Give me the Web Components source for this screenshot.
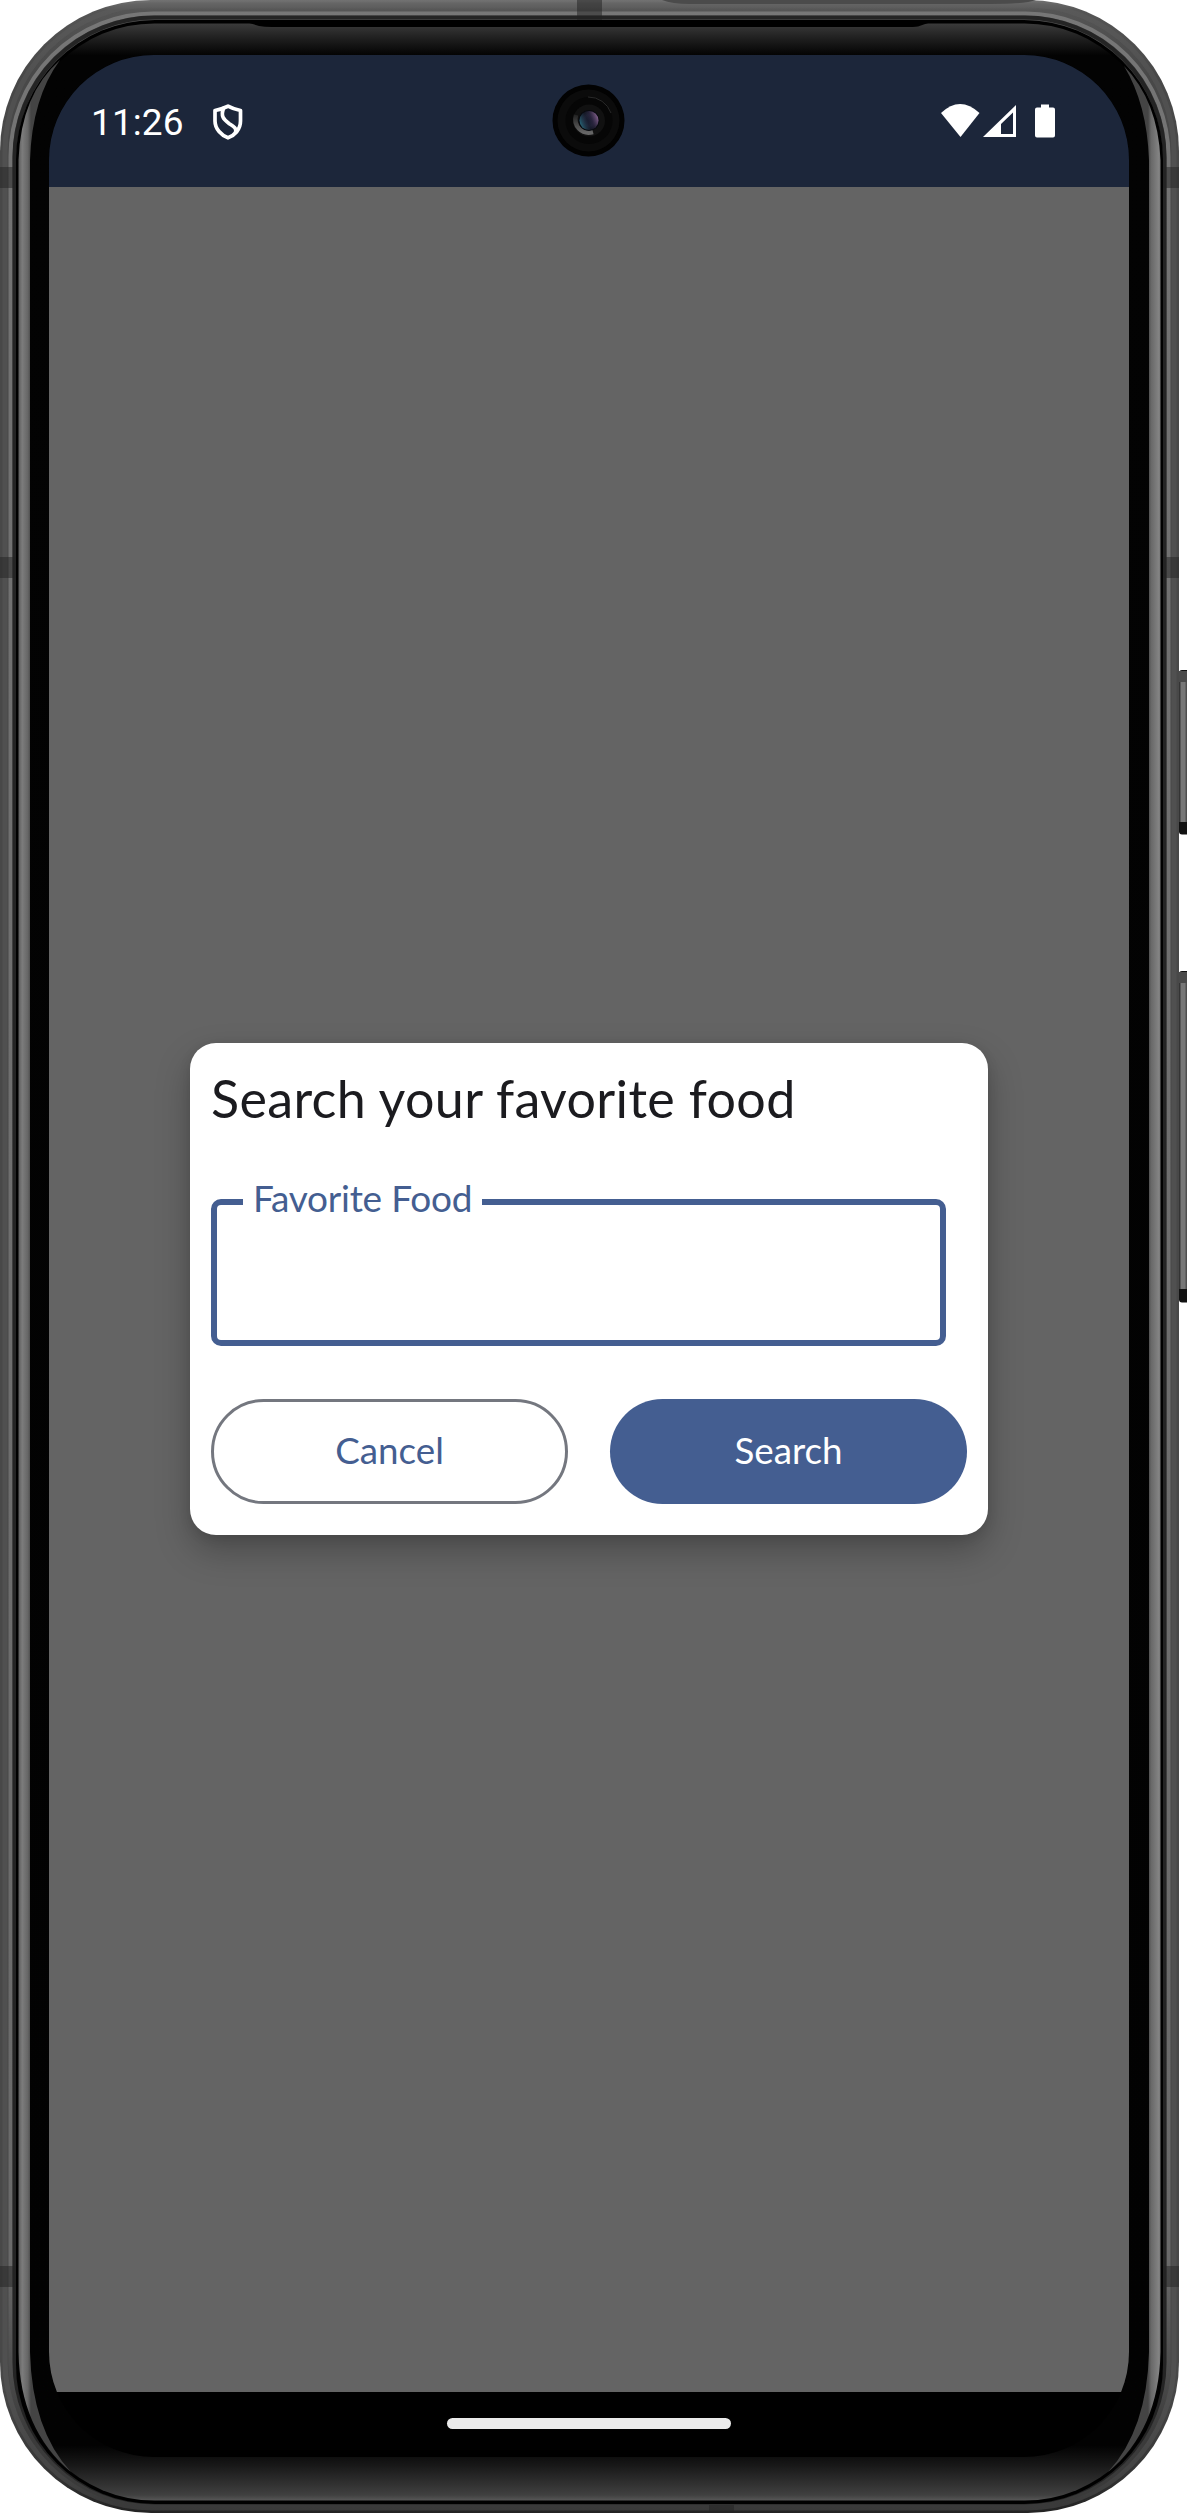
<!DOCTYPE html>
<html lang="en"><head><meta charset="utf-8"><title>Favorite food</title>
<style>html,body{margin:0;background:#fff}body{width:1187px;height:2513px;overflow:hidden;font-family:Lato,sans-serif}</style></head>
<body>
<phone-frame>
  <status-bar slot="status" time="11:26"></status-bar>
  <search-dialog heading="Search your favorite food">
    <outlined-field label="Favorite Food"></outlined-field>
    <pill-button slot="actions" variant="outlined">Cancel</pill-button>
    <pill-button slot="actions" variant="filled">Search</pill-button>
  </search-dialog>
</phone-frame>
<script>
const define=(name,html)=>customElements.define(name,class extends HTMLElement{
  constructor(){super();this.attachShadow({mode:'open'}).innerHTML=html;}
  connectedCallback(){this.shadowRoot.querySelectorAll('[data-attr]').forEach(n=>n.textContent=this.getAttribute(n.dataset.attr)||'');}
});

define('phone-shell',`<style>:host{display:block;width:1187px;height:2513px}svg{display:block}</style>
<svg width="1187" height="2513" viewBox="0 0 1187 2513">
<defs>
<linearGradient id="body" x2="0" y2="1"><stop offset="0" stop-color="#727272"/><stop offset=".004" stop-color="#555"/><stop offset=".03" stop-color="#484848"/><stop offset=".95" stop-color="#484848"/><stop offset=".985" stop-color="#343434"/><stop offset="1" stop-color="#222"/></linearGradient>
<linearGradient id="rim" gradientUnits="userSpaceOnUse" x1="0" x2="0" y1="10" y2="2508"><stop offset="0" stop-color="#777"/><stop offset=".06" stop-color="#737373"/><stop offset=".9" stop-color="#6a6a6a"/><stop offset=".97" stop-color="#3b3b3b"/><stop offset="1" stop-color="#3a3a3a"/></linearGradient>
<linearGradient id="glass" gradientUnits="userSpaceOnUse" x1="0" x2="0" y1="23" y2="2500"><stop offset="0" stop-color="#3b3b3b"/><stop offset=".006" stop-color="#202020"/><stop offset=".013" stop-color="#030303"/><stop offset=".978" stop-color="#020202"/><stop offset=".986" stop-color="#181818"/><stop offset=".998" stop-color="#404040"/><stop offset="1" stop-color="#555"/></linearGradient>
<linearGradient id="edge" gradientUnits="userSpaceOnUse" x1="18.500" x2="31" y1="0" y2="0"><stop offset="0" stop-color="#5c5c5c"/><stop offset=".3" stop-color="#7c7c7c"/><stop offset=".75" stop-color="#666"/><stop offset="1" stop-color="#444"/></linearGradient>
<linearGradient id="edge2" gradientUnits="userSpaceOnUse" x1="1148" x2="1160.500" y1="0" y2="0"><stop offset="0" stop-color="#444"/><stop offset=".25" stop-color="#686868"/><stop offset=".85" stop-color="#838383"/><stop offset="1" stop-color="#777"/></linearGradient>
<linearGradient id="key"><stop offset="0" stop-color="#222"/><stop offset=".3" stop-color="#777"/><stop offset=".7" stop-color="#777"/><stop offset="1" stop-color="#444"/></linearGradient>
</defs>
<g><rect x="1179" y="670" width="12" height="164.500" rx="3" fill="#111"/><rect x="1179" y="671" width="8" height="11" fill="#4a4a4a"/><rect x="1179" y="682" width="8" height="140" fill="url(#key)"/>
<rect x="1179" y="971" width="12" height="331.500" rx="3" fill="#111"/><rect x="1179" y="972" width="8" height="11" fill="#4a4a4a"/><rect x="1179" y="983" width="8" height="306" fill="url(#key)"/></g>
<rect x="0" y="0" width="1179" height="2513" rx="151" fill="url(#body)"/>
<rect x="5" y="5" width="1169" height="2503" rx="147" fill="none" stroke="#606060" stroke-opacity=".35" stroke-width="5"/>
<rect x="10.500" y="13.500" width="1158" height="2492" rx="143" fill="none" stroke="url(#rim)" stroke-width="4"/>
<rect x="14.500" y="17.500" width="1150" height="2485" rx="140" fill="none" stroke="#242424" stroke-width="4"/>
<path d="M662 0H1036Q1026 4 990 4H690Q672 4 662 0Z" fill="#4b4b4b"/>
<g fill="#222" fill-opacity=".5"><rect x="577" y="0" width="25" height="20"/><rect x="0" y="167" width="16" height="21"/><rect x="1163" y="167" width="16" height="21"/><rect x="0" y="557" width="16" height="21"/><rect x="1163" y="557" width="16" height="21"/><rect x="0" y="2266" width="16" height="21"/><rect x="1163" y="2266" width="16" height="21"/><rect x="709" y="2505" width="25" height="8"/></g>
<rect x="16" y="20" width="1147" height="2484" rx="139" fill="#000"/>
<rect x="18.500" y="23.500" width="1142" height="2477" rx="136" fill="url(#glass)"/>
<path d="M246 22H931L918 26.500Q914 27 905 27H272Q264 27 259 26Z" fill="#000"/>
<path d="M18.500 160Q21 94 60 60Q32 98 30 160V2352Q32 2430 71 2472Q20 2430 18.500 2352Z" fill="url(#edge)"/>
<path d="M1160.500 160Q1158 101 1124 66Q1147 104 1149 160V2352Q1147 2430 1108 2472Q1159 2430 1160.500 2352Z" fill="url(#edge2)"/>
</svg>`);

define('phone-frame',`<style>
:host{display:grid;width:1187px;height:2513px}
phone-shell,.screen{grid-area:1/1}
.screen{margin:54.5px 0 0 49px;width:1080px;height:2402px;border-radius:105px;overflow:hidden;display:flex;flex-direction:column;background:#000}
.content{flex:1;background:#646464;display:flex;align-items:flex-start;justify-content:center;padding-top:856px;box-sizing:border-box}
.nav{height:64.5px;display:flex;justify-content:center;align-items:flex-start;padding-top:26px;box-sizing:border-box}
.nav i{width:284px;height:11px;border-radius:5.5px;background:#eaeaea}
</style><phone-shell></phone-shell><div class="screen"><slot name="status"></slot><div class="content"><slot></slot></div><div class="nav"><i></i></div></div>`);

define('front-camera',`<style>:host{display:block;width:73px;height:73px}svg{display:block}</style><svg width="73" height="73" viewBox="0 0 73 73"><defs><radialGradient id="l"><stop offset="0" stop-color="#15192b"/><stop offset=".6" stop-color="#1b1e30"/><stop offset="1" stop-color="#0c1018"/></radialGradient><linearGradient id="r" x1="0" y1=".6" x2="1" y2=".2"><stop offset="0" stop-color="#286578"/><stop offset=".4" stop-color="#202438" stop-opacity=".3"/><stop offset=".6" stop-color="#372b4b" stop-opacity=".5"/><stop offset="1" stop-color="#a276a7"/></linearGradient><linearGradient id="c" x1="0" y1="0" x2="0" y2="1"><stop offset="0" stop-color="#222"/><stop offset="1" stop-color="#666"/></linearGradient></defs>
<circle cx="36.500" cy="36.500" r="36" fill="#020202"/><circle cx="36.500" cy="36.500" r="31" fill="#0b0b0b"/><circle cx="37" cy="36.500" r="23.500" fill="#060606"/><path d="M36 13A24 24 0 0 1 59 29" fill="none" stroke="#292929"/><circle cx="37" cy="36.500" r="16" fill="#111"/><path d="M24 31C21 42 30 51 41 48" fill="none" stroke="url(#c)" stroke-width="4.500"/><circle cx="37" cy="36.500" r="10.500" fill="#07090f"/><circle cx="37" cy="36.500" r="9.500" fill="url(#l)"/><circle cx="37" cy="36.500" r="9.500" fill="url(#r)"/></svg>`);

define('status-bar',`<style>
:host{display:grid;grid-template-columns:1fr 73px 1fr;height:132.5px;background:#1c263a;color:#fff;box-sizing:border-box;padding:29.5px 73px 0 73px;flex:none;align-items:start}
.left{display:flex;align-items:center;gap:29px;height:73px;margin-left:-31px}
.time{font:400 37px/44px Roboto,sans-serif;letter-spacing:.1px;padding-top:5px}
.right{display:flex;justify-content:flex-end;height:73px;align-items:center}
front-camera{margin-left:-.5px}
svg{display:block}
.left svg{margin-top:2px}
</style><div class="left"><span class="time" data-attr="time"></span><svg width="30" height="36" viewBox="0 0 30 36" fill="none" stroke="#fff" stroke-width="3.700" stroke-linejoin="round" stroke-linecap="round"><path d="M15 2.200Q20 5 27.500 6.500V17C27.500 25.500 21.500 31.500 15 33.800C8.500 31.500 2 25 2 17V6.500Q9 5 15 2.200Z"/><path d="M10.500 4.500C7.500 12 10.500 15.500 16 19.500C20.500 22.500 24 24 22.500 28.500"/></svg></div><front-camera></front-camera><div class="right"><svg width="116" height="36" viewBox="0 0 116 36" fill="#fff"><path d="M1 10Q20 -8 39.500 10L20.500 34Z"/><path fill-rule="evenodd" d="M76 2V34H43ZM73 9.500L61 21V31H73Z"/><path d="M101 1.500H109V4.500H113Q115 4.500 115 6.500V32.500Q115 34.500 113 34.500H97Q95 34.500 95 32.500V6.500Q95 4.500 97 4.500H101Z"/></svg></div>`);

define('search-dialog',`<style>
:host{display:flex;flex-direction:column;align-items:flex-start;box-sizing:border-box;width:776px;width:798px;height:492px;background:#fff;border-radius:26px;padding:20px 21px 31px;box-shadow:0 16px 34px rgba(0,0,0,.26),0 3px 12px rgba(0,0,0,.1)}
h1{margin:0;font:400 52px/70px Lato,sans-serif;color:#1b1b1f;letter-spacing:.35px;white-space:nowrap}
.actions{display:flex;gap:42px;margin-top:auto;width:100%}
</style><h1 data-attr="heading"></h1><slot></slot><div class="actions"><slot name="actions"></slot></div>`);

define('outlined-field',`<style>
:host{display:block;margin-top:47px}
fieldset{box-sizing:border-box;width:735px;height:166px;margin:0;border:6px solid #445e91;border-radius:10px;padding:0 0 0 26px;min-width:0}
legend{box-sizing:border-box;height:44px;width:239px;margin:0;padding:0 0 0 10px;text-align:left;font:400 37px/35px Lato,sans-serif;letter-spacing:-.25px;color:#445e91;white-space:nowrap}
</style><fieldset><legend data-attr="label"></legend></fieldset>`);

define('pill-button',`<style>
:host{display:flex;flex:0 0 357px;height:105px;box-sizing:border-box;border-radius:53px;align-items:center;justify-content:center;font:400 36.75px/50px Lato,sans-serif;padding-bottom:3px}
:host([variant=outlined]){border:3px solid #74777f;color:#445e91}
:host([variant=filled]){background:#445e91;color:#fff}
</style><slot></slot>`);
</script></body></html>
